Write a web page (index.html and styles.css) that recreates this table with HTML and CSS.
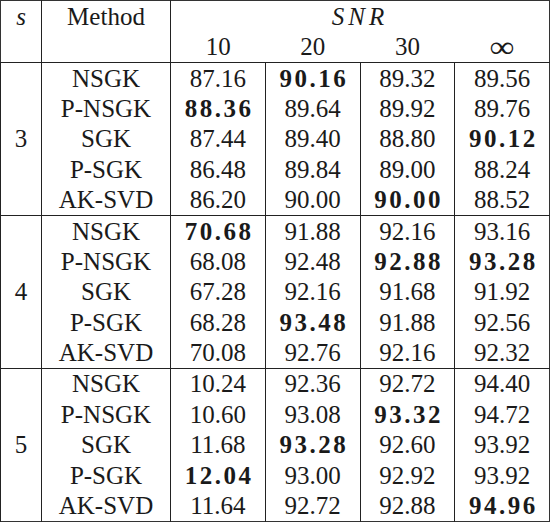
FILE: index.html
```html
<!DOCTYPE html>
<html lang="en">
<head>
    <meta charset="UTF-8">
    <meta name="viewport" content="width=device-width, initial-scale=1.0">
    <title>SNR Results</title>
    <link rel="stylesheet" href="styles.css">
</head>
<body>
    <table class="results">
        <colgroup>
            <col class="col-s">
            <col class="col-method">
            <col class="col-snr">
            <col class="col-snr">
            <col class="col-snr">
            <col class="col-snr">
        </colgroup>
        <thead>
            <tr>
                <th class="math sep">s</th>
                <th class="sep">Method</th>
                <th class="math snr" colspan="4">SNR</th>
            </tr>
            <tr class="head-bottom">
                <th class="sep"></th>
                <th class="sep"></th>
                <th>10</th>
                <th>20</th>
                <th>30</th>
                <th><span class="inf">&infin;</span></th>
            </tr>
        </thead>

        <!-- s = 3 -->
        <tbody>
            <tr><td class="group" rowspan="5">3</td><td>NSGK</td><td>87.16</td><td><b>90.16</b></td><td>89.32</td><td>89.56</td></tr>
            <tr><td>P-NSGK</td><td><b>88.36</b></td><td>89.64</td><td>89.92</td><td>89.76</td></tr>
            <tr><td>SGK</td><td>87.44</td><td>89.40</td><td>88.80</td><td><b>90.12</b></td></tr>
            <tr><td>P-SGK</td><td>86.48</td><td>89.84</td><td>89.00</td><td>88.24</td></tr>
            <tr><td>AK-SVD</td><td>86.20</td><td>90.00</td><td><b>90.00</b></td><td>88.52</td></tr>
        </tbody>

        <!-- s = 4 -->
        <tbody>
            <tr><td class="group" rowspan="5">4</td><td>NSGK</td><td><b>70.68</b></td><td>91.88</td><td>92.16</td><td>93.16</td></tr>
            <tr><td>P-NSGK</td><td>68.08</td><td>92.48</td><td><b>92.88</b></td><td><b>93.28</b></td></tr>
            <tr><td>SGK</td><td>67.28</td><td>92.16</td><td>91.68</td><td>91.92</td></tr>
            <tr><td>P-SGK</td><td>68.28</td><td><b>93.48</b></td><td>91.88</td><td>92.56</td></tr>
            <tr><td>AK-SVD</td><td>70.08</td><td>92.76</td><td>92.16</td><td>92.32</td></tr>
        </tbody>

        <!-- s = 5 -->
        <tbody>
            <tr><td class="group" rowspan="5">5</td><td>NSGK</td><td>10.24</td><td>92.36</td><td>92.72</td><td>94.40</td></tr>
            <tr><td>P-NSGK</td><td>10.60</td><td>93.08</td><td><b>93.32</b></td><td>94.72</td></tr>
            <tr><td>SGK</td><td>11.68</td><td><b>93.28</b></td><td>92.60</td><td>93.92</td></tr>
            <tr><td>P-SGK</td><td><b>12.04</b></td><td>93.00</td><td>92.92</td><td>93.92</td></tr>
            <tr><td>AK-SVD</td><td>11.64</td><td>92.72</td><td>92.88</td><td><b>94.96</b></td></tr>
        </tbody>
    </table>
</body>
</html>
```

FILE: styles.css
```css
body {
    margin: 0;
    background-color: #ffffff;
    font-family: 'Liberation Serif', 'Times New Roman', serif;
    color: #1a1a1a;
}

.results {
    border-collapse: collapse;
    table-layout: fixed;
    width: 549px;
    border: 1px solid #333333;
    font-size: 25px;
}

.col-s {
    width: 41px;
}

.col-method {
    width: 129px;
}

.col-snr {
    width: 94.75px;
}

th,
td {
    padding: 0;
    text-align: center;
    font-weight: normal;
    line-height: 1;
}

thead tr {
    height: 31px;
}

tbody tr {
    height: 30.6px;
}

tbody td {
    border-left: 1px solid #222222;
}

tbody {
    border-top: 1px solid #222222;
}

.sep {
    border-right: 1px solid #222222;
}

.math {
    font-style: italic;
}

.snr {
    letter-spacing: 4px;
}

.inf {
    display: inline-block;
    transform: scale(1.4, 1.2);
}

b {
    font-weight: bold;
    letter-spacing: 2.5px;
    margin-right: -2.5px;
}
```
